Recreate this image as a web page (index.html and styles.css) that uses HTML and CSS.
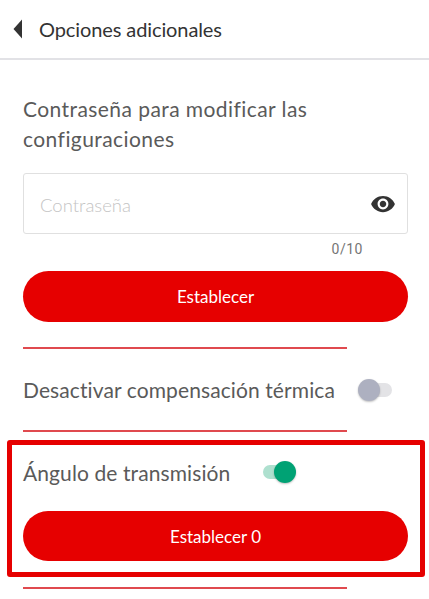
FILE: index.html
```html
<!DOCTYPE html>
<html lang="es">
<head>
    <meta name="viewport" content="width=device-width, initial-scale=1.0">
    <link rel="stylesheet" href="styles.css">
</head>
<body>
    <!-- header -->
    <div class="top-bar">
        <svg class="back-icon" width="10" height="20" viewBox="0 0 10 20" xmlns="http://www.w3.org/2000/svg">
            <path d="M9 0.5V19.5L0.5 10Z" fill="#333333" />
        </svg>
        <span class="top-title">Opciones adicionales</span>
    </div>

    <div class="content">
        <div class="section-title">Contraseña para modificar las configuraciones</div>

        <div class="password-box">
            <span class="password-placeholder">Contraseña</span>
            <svg class="eye-icon" width="26" height="26" viewBox="0 0 24 24" xmlns="http://www.w3.org/2000/svg">
                <path d="M12 4.5C7 4.5 2.73 7.61 1 12c1.73 4.39 6 7.5 11 7.5s9.27-3.11 11-7.5c-1.73-4.39-6-7.5-11-7.5zM12 17c-2.76 0-5-2.24-5-5s2.24-5 5-5 5 2.24 5 5-2.24 5-5 5zm0-8c-1.66 0-3 1.34-3 3s1.34 3 3 3 3-1.34 3-3-1.34-3-3-3z" fill="#333333" />
            </svg>
        </div>
        <div class="char-count">0/10</div>

        <button class="red-button">Establecer</button>
        <div class="divider first-divider"></div>

        <div class="toggle-row thermal-row">
            <span class="row-label">Desactivar compensación térmica</span>
            <span class="toggle"><span class="toggle-knob"></span></span>
        </div>
        <div class="divider"></div>

        <!-- highlighted block -->
        <div class="highlight-box">
            <div class="toggle-row">
                <span class="row-label">Ángulo de transmisión</span>
                <span class="toggle on"><span class="toggle-knob"></span></span>
            </div>
            <button class="red-button">Establecer 0</button>
        </div>
        <div class="divider"></div>
    </div>
</body>
</html>
```

FILE: styles.css
```css
html, body {
    height: 100%;
}

body {
    margin: 0;
    padding: 0;
    background-color: #fff;
    font-family: Lato, "Open Sans", sans-serif;
    color: #5a5a5a;
    overflow: hidden;
}

/* header */
.top-bar {
    height: 60px;
    box-sizing: border-box;
    padding-left: 13px;
    display: flex;
    align-items: center;
    gap: 16px;
    border-bottom: 2px solid #e2e2e6;
}

.back-icon {
    flex: none;
}

.top-title {
    font-size: 20px;
    letter-spacing: -0.1px;
    color: #333;
}

/* content */
.content {
    padding: 0 21px 0 23px;
}

.section-title {
    margin-top: 34px;
    font-size: 21px;
    line-height: 30px;
    letter-spacing: 0.43px;
}

.password-box {
    margin-top: 19px;
    height: 61px;
    box-sizing: border-box;
    border: 1px solid #e0e0e0;
    border-radius: 3px;
    padding: 2px 11px 0 16px;
    display: flex;
    align-items: center;
    justify-content: space-between;
}

.password-placeholder {
    font-size: 18.5px;
    font-weight: 300;
    color: #c4c4c4;
}

.eye-icon {
    margin-top: -2px;
}

.char-count {
    margin-top: 7px;
    padding-right: 45px;
    font-family: Roboto, sans-serif;
    font-size: 14px;
    line-height: 16px;
    letter-spacing: 0.5px;
    text-align: right;
    color: #757575;
}

.red-button {
    display: block;
    width: 100%;
    height: 51px;
    border: none;
    border-radius: 26px;
    background-color: #e60000;
    color: #fff;
    font-family: inherit;
    font-size: 17px;
    padding: 0;
}

.char-count + .red-button {
    margin-top: 14px;
}

.divider {
    width: 324px;
    height: 2px;
    background-color: #e04a4f;
}

.first-divider {
    margin-top: 25px;
}

.toggle-row {
    display: flex;
    align-items: center;
}

.thermal-row {
    height: 81px;
}

.row-label {
    font-size: 21px;
    letter-spacing: 0.1px;
}

/* switch */
.toggle {
    position: relative;
    width: 30px;
    height: 14px;
    border-radius: 7px;
    background-color: #e3e3e6;
    margin-left: 27px;
}

.toggle-knob {
    position: absolute;
    left: -4px;
    top: -4px;
    width: 22px;
    height: 22px;
    border-radius: 50%;
    background-color: #adb0c0;
    box-shadow: 0 1px 2px rgba(0, 0, 0, 0.25);
}

.toggle.on {
    background-color: #aee0cf;
    margin-left: 33px;
}

.toggle.on .toggle-knob {
    left: auto;
    right: -3px;
    background-color: #00a274;
}

/* red frame around the last block */
.highlight-box {
    margin: 8px -17px 10px -16px;
    height: 137px;
    box-sizing: border-box;
    border: 5px solid #e60000;
    border-radius: 3px;
    padding: 8px 12px 0 11px;
}

.highlight-box .toggle-row {
    height: 38px;
    margin-bottom: 20px;
}

.highlight-box .red-button {
    height: 50px;
}
```
